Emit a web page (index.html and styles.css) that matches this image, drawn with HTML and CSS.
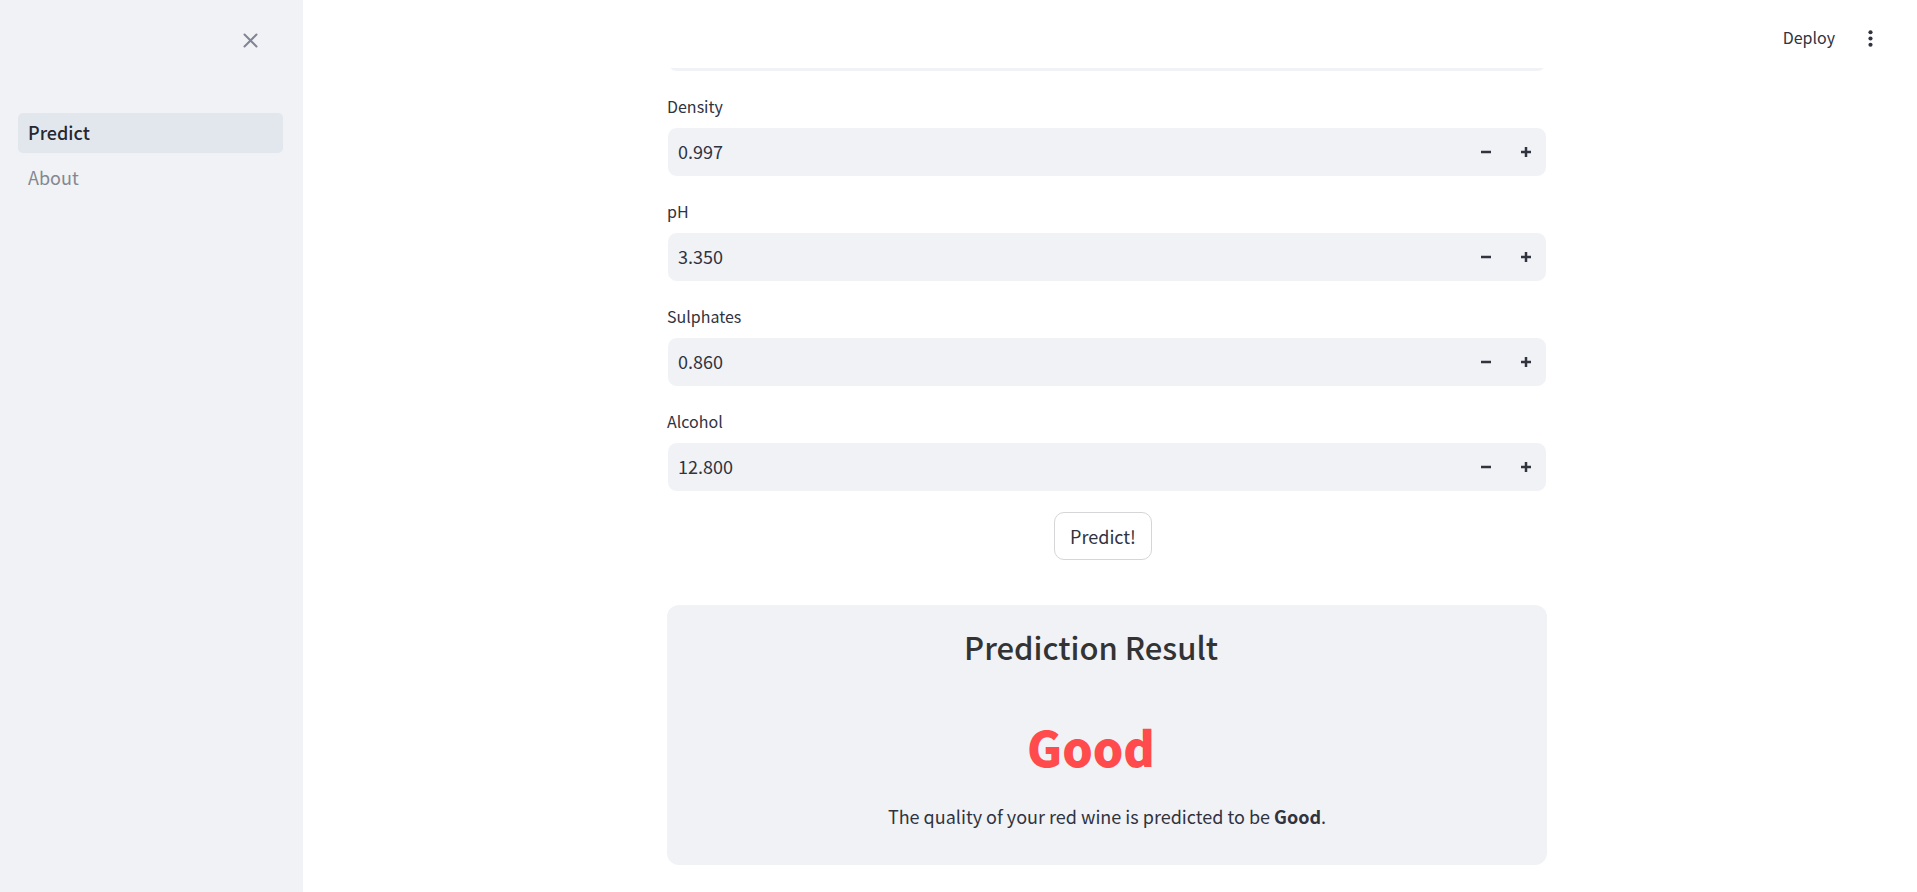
FILE: index.html
```html
<!DOCTYPE html>
<html lang="en">
<head>
<meta charset="utf-8">
<meta name="viewport" content="width=device-width, initial-scale=1">
<title>Predict</title>
<link rel="stylesheet" href="styles.css">
</head>
<body>
<div class="app">
  <aside class="sidebar">
    <div class="sidebar-top">
      <button class="icon-button" type="button" aria-label="Close sidebar">
        <svg width="15" height="15" viewBox="0 0 15 15" fill="none" stroke="currentColor" stroke-width="2" stroke-linecap="round"><path d="M1.5 1.5l12 12M13.5 1.5l-12 12"/></svg>
      </button>
    </div>
    <nav class="nav">
      <a class="nav-link active" href="#predict">Predict</a>
      <a class="nav-link" href="#about">About</a>
    </nav>
  </aside>
  <div class="page">
    <header class="toolbar">
      <button class="deploy" type="button">Deploy</button>
      <button class="icon-button" type="button" aria-label="Main menu">
        <svg width="25" height="25" viewBox="0 0 24 24" fill="currentColor"><circle cx="12" cy="6" r="2"/><circle cx="12" cy="12" r="2"/><circle cx="12" cy="18" r="2"/></svg>
      </button>
    </header>
    <main class="content">
      <div class="scrolled"><div class="number-box"></div></div>
      <div class="field">
        <label for="density">Density</label>
        <div class="number-box">
          <input id="density" type="text" inputmode="decimal" value="0.997">
          <button type="button" aria-label="Decrease density"><svg width="10" height="10" viewBox="0 0 8 8" fill="currentColor"><path d="M0 3v2h8V3H0z"/></svg></button>
          <button type="button" aria-label="Increase density"><svg width="10" height="10" viewBox="0 0 8 8" fill="currentColor"><path d="M3 0v3H0v2h3v3h2V5h3V3H5V0H3z"/></svg></button>
        </div>
      </div>
      <div class="field">
        <label for="ph">pH</label>
        <div class="number-box">
          <input id="ph" type="text" inputmode="decimal" value="3.350">
          <button type="button" aria-label="Decrease pH"><svg width="10" height="10" viewBox="0 0 8 8" fill="currentColor"><path d="M0 3v2h8V3H0z"/></svg></button>
          <button type="button" aria-label="Increase pH"><svg width="10" height="10" viewBox="0 0 8 8" fill="currentColor"><path d="M3 0v3H0v2h3v3h2V5h3V3H5V0H3z"/></svg></button>
        </div>
      </div>
      <div class="field">
        <label for="sulphates">Sulphates</label>
        <div class="number-box">
          <input id="sulphates" type="text" inputmode="decimal" value="0.860">
          <button type="button" aria-label="Decrease sulphates"><svg width="10" height="10" viewBox="0 0 8 8" fill="currentColor"><path d="M0 3v2h8V3H0z"/></svg></button>
          <button type="button" aria-label="Increase sulphates"><svg width="10" height="10" viewBox="0 0 8 8" fill="currentColor"><path d="M3 0v3H0v2h3v3h2V5h3V3H5V0H3z"/></svg></button>
        </div>
      </div>
      <div class="field">
        <label for="alcohol">Alcohol</label>
        <div class="number-box">
          <input id="alcohol" type="text" inputmode="decimal" value="12.800">
          <button type="button" aria-label="Decrease alcohol"><svg width="10" height="10" viewBox="0 0 8 8" fill="currentColor"><path d="M0 3v2h8V3H0z"/></svg></button>
          <button type="button" aria-label="Increase alcohol"><svg width="10" height="10" viewBox="0 0 8 8" fill="currentColor"><path d="M3 0v3H0v2h3v3h2V5h3V3H5V0H3z"/></svg></button>
        </div>
      </div>
      <div class="actions"><button class="predict" type="button">Predict!</button></div>
      <section class="result">
        <h2>Prediction Result</h2>
        <h1>Good</h1>
        <p>The quality of your red wine is predicted to be <strong>Good</strong>.</p>
      </section>
    </main>
  </div>
</div>
</body>
</html>
```

FILE: styles.css
```css
* {
  box-sizing: border-box;
}

body {
  margin: 0;
  background: #fff;
  color: #31333f;
  font-family: "Noto Sans CJK SC", "Noto Sans", sans-serif;
  font-size: 18px;
  line-height: 30px;
}

button,
input {
  margin: 0;
  padding: 0;
  border: 0;
  background: none;
  color: inherit;
  font: inherit;
}

button {
  cursor: pointer;
}

svg {
  display: block;
}

.app {
  display: flex;
  min-height: 100vh;
}

.sidebar {
  flex: 0 0 303px;
  background: #f0f2f6;
}

.sidebar-top {
  display: flex;
  justify-content: flex-end;
  height: 113px;
  padding: 25px 37px 0 0;
}

.icon-button {
  display: grid;
  place-items: center;
  width: 31px;
  height: 31px;
}

.sidebar .icon-button {
  color: #808495;
}

.nav {
  display: flex;
  flex-direction: column;
  gap: 5px;
  padding: 0 20px 0 18px;
}

.nav-link {
  padding: 4px 10px 6px;
  border-radius: 5px;
  color: #85878f;
  text-decoration: none;
}

.nav-link.active {
  background: #e2e7ee;
  color: #262730;
  font-weight: 500;
}

.page {
  flex: 1;
  min-width: 0;
  padding-right: 6px;
}

.toolbar {
  display: flex;
  align-items: center;
  justify-content: flex-end;
  gap: 20px;
  height: 68px;
  padding: 8px 25px 0 20px;
}

.deploy {
  padding-bottom: 2px;
  font-size: 16px;
}

.content {
  display: flex;
  flex-direction: column;
  gap: 20px;
  width: calc(100% - 40px);
  max-width: 880px;
  margin: 0 auto;
}

.scrolled {
  display: flex;
  flex-direction: column;
  justify-content: flex-end;
  height: 4px;
  overflow: hidden;
}

.scrolled .number-box {
  flex-shrink: 0;
}

.field label {
  display: block;
  margin-bottom: 7px;
  font-size: 16px;
  line-height: 28px;
}

.number-box {
  display: flex;
  height: 50px;
  border: 1px solid #fff;
  border-radius: 10px;
  background: #f0f2f6;
  overflow: hidden;
}

.number-box input {
  flex: 1;
  min-width: 0;
  padding: 0 10px 2px;
}

.number-box button {
  display: grid;
  place-items: center;
  width: 40px;
}

.actions {
  display: flex;
  justify-content: center;
  padding-right: 8px;
}

.predict {
  height: 48px;
  padding: 0 15px;
  border: 1px solid #d6d6d9;
  border-radius: 10px;
}

.result {
  margin-top: 25px;
  padding: 20px 20px 14px;
  border-radius: 12px;
  background: #f0f2f6;
  text-align: center;
}

.result h2,
.result h1 {
  margin: 0;
  padding-right: 32px;
}

.result h2 {
  color: #333;
  font-size: 31px;
  font-weight: 500;
  line-height: 44px;
}

.result h1 {
  margin-top: 48px;
  color: #ff4b4b;
  font-size: 48px;
  font-weight: 900;
  line-height: 58px;
}

.result p {
  margin: 26px 0 20px;
}

.result strong {
  font-weight: 600;
}
```
